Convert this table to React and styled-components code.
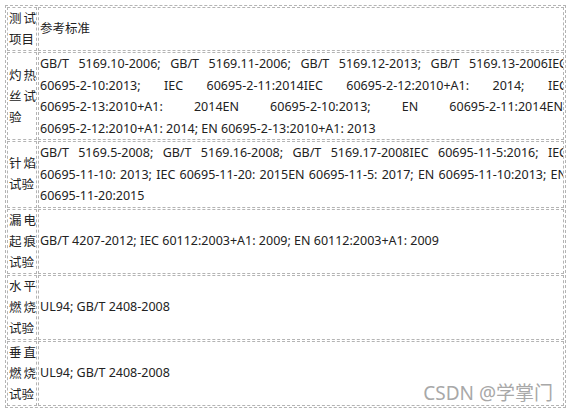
import React from 'react';
import styled, { createGlobalStyle } from 'styled-components';

const GlobalStyle = createGlobalStyle`
  html, body {
    margin: 0;
    padding: 0;
    background: #ffffff;
  }
`;

const rows = [
  {
    item: '测试项目',
    lines: [{ text: '参考标准', last: true }],
  },
  {
    item: '灼热丝试验',
    lines: [
      { text: 'GB/T 5169.10-2006; GB/T 5169.11-2006; GB/T 5169.12-2013; GB/T 5169.13-2006IEC', over: true },
      { text: '60695-2-10:2013; IEC 60695-2-11:2014IEC 60695-2-12:2010+A1: 2014; IEC', over: true },
      { text: '60695-2-13:2010+A1: 2014EN 60695-2-10:2013; EN 60695-2-11:2014EN' },
      { text: '60695-2-12:2010+A1: 2014; EN 60695-2-13:2010+A1: 2013', last: true },
    ],
  },
  {
    item: '针焰试验',
    lines: [
      { text: 'GB/T 5169.5-2008; GB/T 5169.16-2008; GB/T 5169.17-2008IEC 60695-11-5:2016; IEC', over: true },
      { text: '60695-11-10: 2013; IEC 60695-11-20: 2015EN 60695-11-5: 2017; EN 60695-11-10:2013; EN', over: true },
      { text: '60695-11-20:2015', last: true },
    ],
  },
  {
    item: '漏电起痕试验',
    lines: [{ text: 'GB/T 4207-2012; IEC 60112:2003+A1: 2009; EN 60112:2003+A1: 2009', last: true }],
  },
  {
    item: '水平燃烧试验',
    lines: [{ text: 'UL94; GB/T 2408-2008', last: true }],
  },
  {
    item: '垂直燃烧试验',
    lines: [{ text: 'UL94; GB/T 2408-2008', last: true }],
  },
];

export default function App() {
  return (
    <>
      <GlobalStyle />
      <Page>
        <Table>
          <colgroup>
            <col style={{ width: 30 }} />
            <col />
          </colgroup>
          <tbody>
            {rows.map((row) => (
              <tr key={row.item}>
                <ItemCell>{row.item}</ItemCell>
                <StdCell>
                  <Clip>
                    {row.lines.map((l) => (
                      <Line key={l.text} $last={l.last} $over={l.over}>
                        {l.text}
                      </Line>
                    ))}
                  </Clip>
                </StdCell>
              </tr>
            ))}
          </tbody>
        </Table>
        <Watermark>CSDN @学掌门</Watermark>
      </Page>
    </>
  );
}

const Page = styled.div`
  position: relative;
  width: 568px;
  height: 411px;
  padding: 5px 0 0 5px;
  box-sizing: border-box;
  font-family: "Noto Sans", "Noto Sans CJK SC", sans-serif;
  font-size: 12.5px;
  color: #222222;
`;

const Table = styled.table`
  width: 561px;
  table-layout: fixed;
  border: 1px dashed #b4b4b4;
  border-spacing: 1px;
  border-collapse: separate;
`;

const Cell = styled.td`
  border: 1px dashed #b4b4b4;
  padding: 0;
  vertical-align: middle;
  line-height: 21px;
`;

const ItemCell = styled(Cell)`
  text-align: justify;
  word-break: break-all;
  padding: 0 0 0 1px;
`;

const StdCell = styled(Cell)`
  padding: 0 0 0 1px;
  line-height: 21.5px;
`;

const Clip = styled.div`
  overflow: hidden;
`;

const Line = styled.div`
  white-space: nowrap;
  text-align: ${(p) => (p.$last ? 'left' : 'justify')};
  text-align-last: ${(p) => (p.$last ? 'left' : 'justify')};
  width: ${(p) => (p.$over ? 'calc(100% + 4px)' : '100%')};
`;

const Watermark = styled.div`
  position: absolute;
  right: 15px;
  bottom: 7px;
  font-family: "Noto Sans", "Noto Sans CJK SC", sans-serif;
  font-size: 19px;
  line-height: 22px;
  color: #a8a8a8;
  text-shadow: 0 0 1px #ffffff, 1px 1px 0 #ffffff;
`;
